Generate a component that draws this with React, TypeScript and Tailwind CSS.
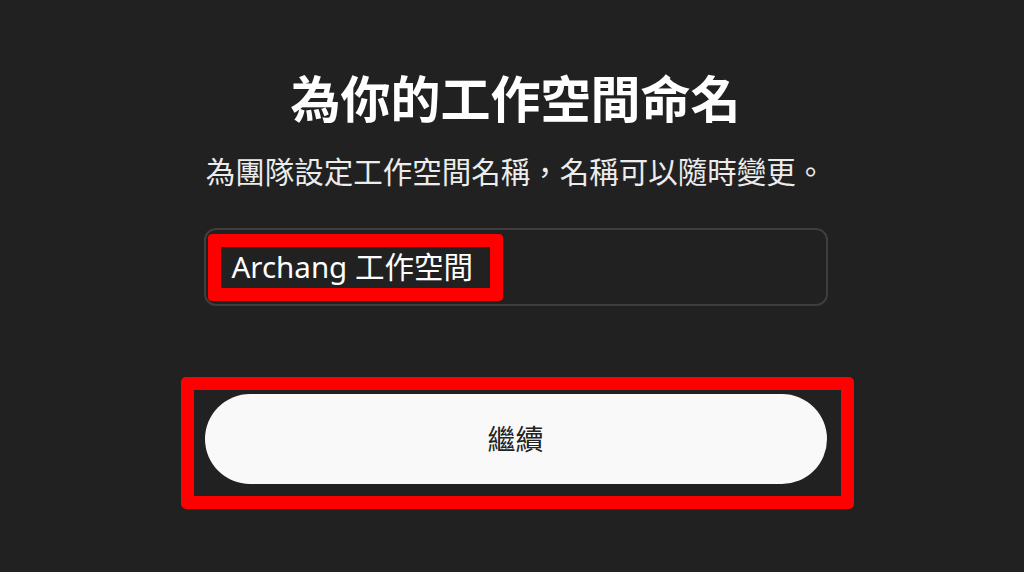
export default function App() {
  return (
    <div className="min-h-[572px] w-full bg-[#212121] font-['Noto_Sans','Noto_Sans_CJK_TC',sans-serif] flex flex-col items-center pl-[7px] pt-[69px]">
      {/* Heading */}
      <h1 className="text-[50px] leading-[60px] font-bold text-white">為你的工作空間命名</h1>
      <p className="mt-[23px] text-[29.5px] leading-[40px] text-[#ececec]">
        為團隊設定工作空間名稱，名稱可以隨時變更。
      </p>

      {/* Name input */}
      <div className="relative mt-[36px] w-[624px] h-[78px] rounded-[12px] border-2 border-[#3e3e3e] bg-[#212121] flex items-center pl-[26px]">
        <span className="text-[29.5px] leading-[36px] text-white">Archang 工作空間</span>
        <div className="absolute left-[2px] top-[4px] w-[295px] h-[67px] rounded-[4px] border-[13px] border-[#ff0000] pointer-events-none" />
      </div>

      {/* Continue */}
      <div className="relative mt-[88px]">
        <button className="w-[622px] h-[90px] rounded-full bg-[#f9f9f9] text-[28px] text-[#222222]">
          繼續
        </button>
        <div className="absolute left-[-24px] top-[-17px] w-[673px] h-[132px] rounded-[5px] border-[13px] border-[#ff0000] pointer-events-none" />
      </div>
    </div>
  )
}
